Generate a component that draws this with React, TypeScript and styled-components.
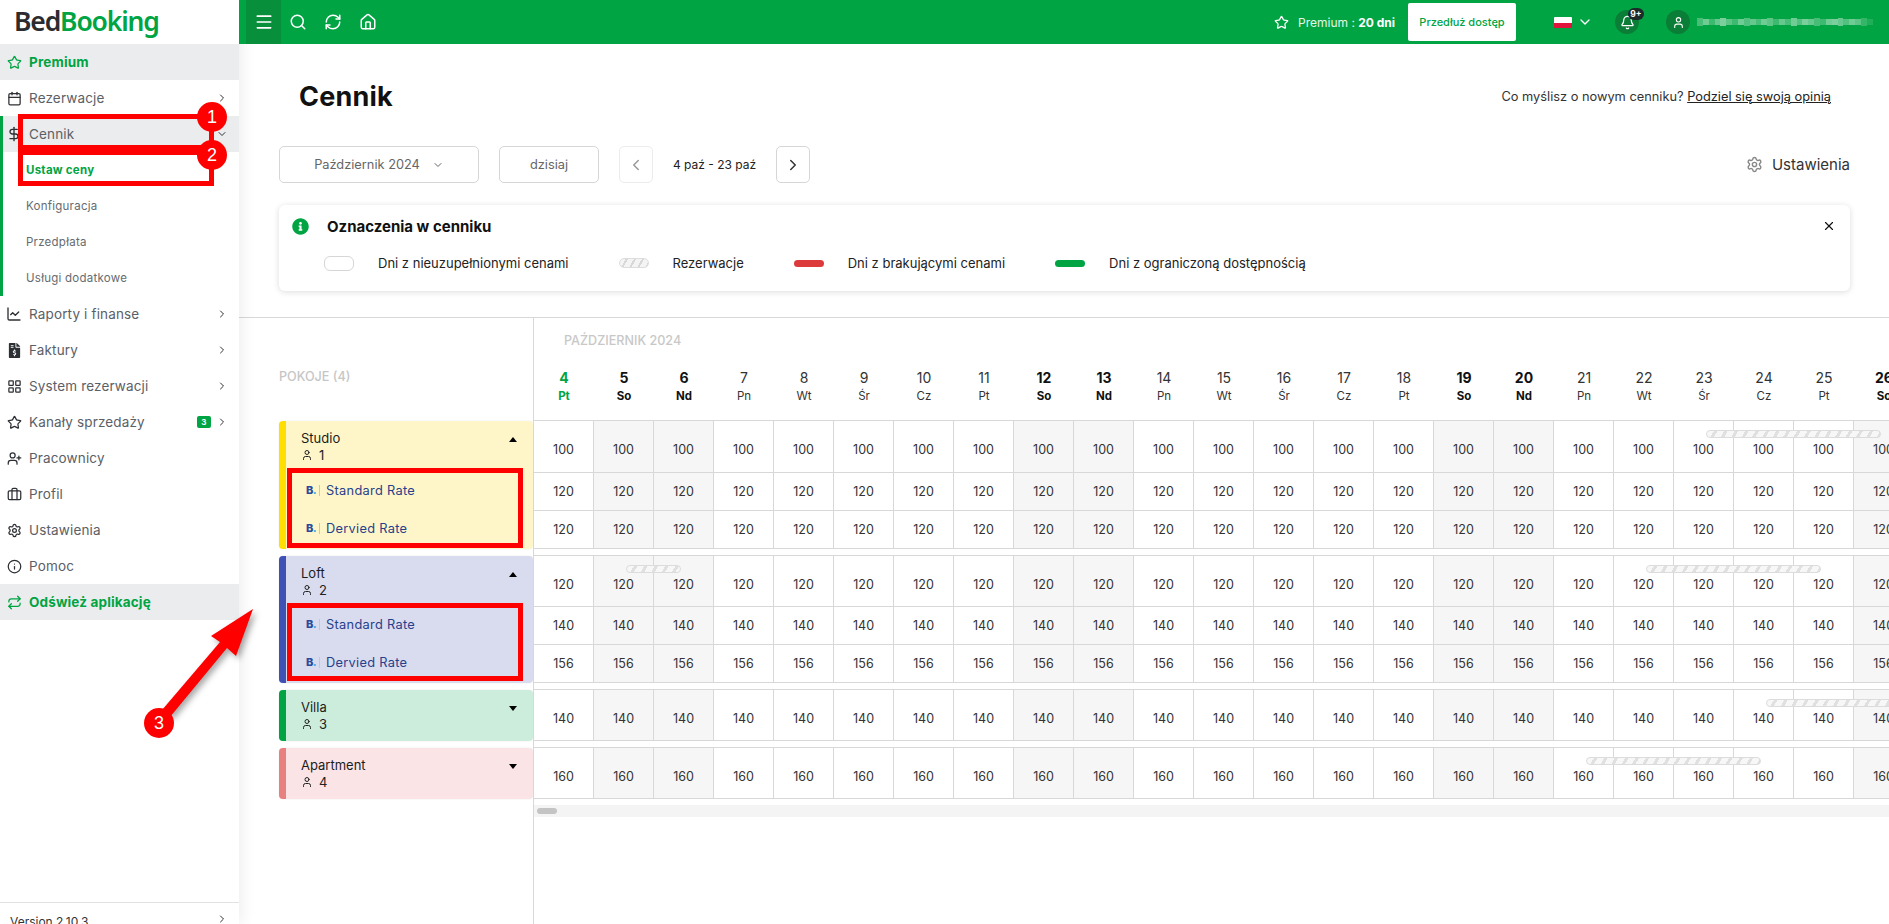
import React from 'react';
import styled, { createGlobalStyle } from 'styled-components';
import {
  Star, Calendar, DollarSign, ChartLine, LayoutGrid, UserPlus, Briefcase, Settings, Info, Repeat,
  ChevronRight, ChevronDown, ChevronLeft, Menu, Search, RefreshCw, House, Bell, User, X,
} from 'lucide-react';
import { FaFileInvoiceDollar, FaInfoCircle } from 'react-icons/fa';

const GREEN = '#00a443';
const GRID = '#d8d8d8';
const FONT = 'Inter, "Open Sans", sans-serif';

const GlobalStyle = createGlobalStyle`
  html, body { margin: 0; padding: 0; background: #fff; }
  body { font-family: ${FONT}; color: #222; overflow: hidden; }
  * { box-sizing: border-box; }
`;

const Page = styled.div`
  position: relative;
  display: flex;
  width: 1889px;
  height: 924px;
  overflow: hidden;
`;

/* sidebar */
const Sidebar = styled.aside`
  position: relative;
  z-index: 1;
  display: flex;
  flex-direction: column;
  flex: 0 0 239px;
  height: 924px;
  overflow: hidden;
  background: #fff;
`;

const SidebarShadow = styled.div`
  flex: 0 0 239px;
  height: 924px;
  box-shadow: 3px 0 14px rgba(0, 0, 0, 0.07);
  position: relative;
`;

const Logo = styled.div`
  height: 44px;
  padding-left: 14px;
  font-family: "Noto Sans", sans-serif;
  font-size: 26.5px;
  line-height: 42px;
  font-weight: 600;
  letter-spacing: -1.15px;
  color: #2b2b30;
  span { color: ${GREEN}; }
`;

const NavRow = styled.div<{ $active?: boolean; $strong?: boolean; $nested?: boolean }>`
  display: flex;
  align-items: center;
  height: 36px;
  padding-left: ${p => (p.$nested ? 3 : 6)}px;
  padding-right: 11px;
  font-size: 13.5px;
  letter-spacing: 0.15px;
  color: ${p => (p.$strong ? GREEN : '#5b6066')};
  font-weight: ${p => (p.$strong ? 700 : 400)};
  background: ${p => (p.$active ? '#ebecee' : 'transparent')};
`;

const NavIcon = styled.span<{ $green?: boolean }>`
  display: flex;
  align-items: center;
  justify-content: center;
  flex: 0 0 16px;
  margin-right: 7px;
  color: ${p => (p.$green ? GREEN : '#2c2f33')};
`;

const NavLabel = styled.span`
  flex: 1;
  white-space: nowrap;
`;

const NavGroup = styled.div`
  border-left: 3px solid ${GREEN};
`;

const SubItem = styled.div<{ $current?: boolean }>`
  display: flex;
  align-items: center;
  height: 36px;
  padding-left: 23px;
  font-size: 11.5px;
  letter-spacing: 0.25px;
  color: ${p => (p.$current ? GREEN : '#666b70')};
  font-weight: ${p => (p.$current ? 700 : 400)};
`;

const CountBadge = styled.span`
  margin-right: 5px;
  width: 14px;
  height: 12px;
  border-radius: 2px;
  background: ${GREEN};
  color: #fff;
  font-size: 8px;
  font-weight: 700;
  line-height: 12px;
  text-align: center;
`;

const VersionRow = styled.div`
  display: flex;
  justify-content: space-between;
  margin-top: auto;
  height: 22px;
  padding: 10px 11px 0 10px;
  border-top: 1px solid #e2e2e2;
  font-size: 12px;
  line-height: 17px;
  color: #333;
  white-space: nowrap;
`;

/* top bar */
const Main = styled.main`
  flex: 1;
  min-width: 0;
  display: flex;
  flex-direction: column;
`;

const TopBar = styled.header`
  position: relative;
  z-index: 2;
  display: flex;
  align-items: center;
  flex: 0 0 44px;
  padding: 0 16px 0 7px;
  background: ${GREEN};
  color: #fff;
`;

const MenuButton = styled.div`
  display: flex;
  align-items: center;
  justify-content: center;
  width: 35px;
  height: 44px;
  margin-right: -1px;
  background: #088f3c;
`;

const TopIcon = styled.div`
  display: flex;
  justify-content: center;
  width: 35px;
`;

const TopRight = styled.div`
  display: flex;
  align-items: center;
  margin-left: auto;
`;

const PremiumText = styled.span`
  margin: 0 13px 0 9px;
  font-size: 12px;
  color: #e4f6ea;
  white-space: nowrap;
  b { color: #fff; font-weight: 700; }
`;

const ExtendButton = styled.div`
  width: 108px;
  height: 38px;
  margin-right: 38px;
  border-radius: 2px;
  background: #fff;
  color: ${GREEN};
  font-size: 11px;
  font-weight: 500;
  line-height: 38px;
  text-align: center;
  white-space: nowrap;
`;

const Flag = styled.div`
  width: 18px;
  height: 11px;
  margin-right: 5px;
  border-radius: 1px;
  background: linear-gradient(#fff 0 55%, #e0143c 55% 100%);
`;

const RoundIcon = styled.div`
  position: relative;
  display: flex;
  align-items: center;
  justify-content: center;
  width: 24px;
  height: 24px;
  border-radius: 50%;
  background: #0a7d36;
`;

const BellWrap = styled(RoundIcon)`
  margin: 0 27px 0 22px;
`;

const NotifyBadge = styled.span`
  position: absolute;
  top: -2px;
  right: -5px;
  width: 16px;
  height: 12px;
  border-radius: 6px;
  background: #1c2b2a;
  font-size: 8.5px;
  font-weight: 700;
  line-height: 12px;
  text-align: center;
`;

const BlurredName = styled.div`
  display: flex;
  align-items: center;
  width: 176px;
  height: 12px;
  margin-left: 7px;
`;

const BlurCell = styled.span<{ $o: number; $h: number }>`
  flex: 1;
  height: ${p => p.$h}px;
  background: #fff;
  opacity: ${p => p.$o * 0.8};
`;

/* page head */
const TitleRow = styled.div`
  display: flex;
  align-items: center;
  justify-content: space-between;
  height: 40px;
  margin-top: 32px;
  padding: 0 58px 0 60px;
`;

const Title = styled.h1`
  margin: 0;
  font-size: 27px;
  font-weight: 700;
  letter-spacing: 0.2px;
  color: #111;
`;

const Feedback = styled.div`
  font-size: 12.8px;
  color: #333;
  a { color: #222; text-decoration: underline; }
`;

const Controls = styled.div`
  display: flex;
  align-items: center;
  height: 37px;
  margin-top: 30px;
  padding: 0 39px 0 40px;
`;

const ControlButton = styled.div<{ $w: number; $faded?: boolean; $mr?: number }>`
  display: flex;
  align-items: center;
  justify-content: center;
  gap: 12px;
  flex: 0 0 ${p => p.$w}px;
  height: 37px;
  margin-right: ${p => p.$mr ?? 0}px;
  border: 1px solid ${p => (p.$faded ? '#ececec' : '#d6d6d6')};
  border-radius: 5px;
  font-size: 12.8px;
  color: #666;
`;

const DateRange = styled.div`
  flex: 0 0 123px;
  font-size: 12px;
  color: #222;
  text-align: center;
  white-space: nowrap;
`;

const SettingsLink = styled.div`
  display: flex;
  align-items: center;
  gap: 9px;
  margin-left: auto;
  font-size: 15px;
  color: #333;
  svg { color: #888; }
`;

const LegendCard = styled.section`
  height: 86px;
  margin: 22px 39px 26px 40px;
  padding: 12px 14px 0 13px;
  border-radius: 6px;
  background: #fff;
  box-shadow: 0 1px 6px rgba(0, 0, 0, 0.14);
`;

const LegendHead = styled.div`
  display: flex;
  align-items: center;
  height: 18px;
  color: ${GREEN};
`;

const LegendTitle = styled.h2`
  margin: 0 auto 0 18px;
  font-size: 15px;
  font-weight: 700;
  color: #111;
`;

const LegendItems = styled.div`
  display: flex;
  align-items: center;
  margin-top: 20px;
  padding-left: 32px;
`;

const LegendLabel = styled.span`
  margin: 0 50px 0 24px;
  font-size: 13px;
  color: #222;
  white-space: nowrap;
`;

const EmptySwatch = styled.span`
  width: 30px;
  height: 15px;
  border: 1px solid #d6d6d6;
  border-radius: 6px;
`;

const HatchSwatch = styled.span`
  width: 30px;
  height: 10px;
  border: 1px solid #ddd;
  border-radius: 5px;
  background: repeating-linear-gradient(120deg, #f4f4f4 0 5px, #d8d8d8 5px 7px);
`;

const BarSwatch = styled.span<{ $color: string }>`
  width: 30px;
  height: 7px;
  border-radius: 4px;
  background: ${p => p.$color};
`;

/* pricing table */
const Pricing = styled.section`
  flex: 1;
  display: flex;
  min-height: 0;
  border-top: 1px solid ${GRID};
`;

const RoomsColumn = styled.div`
  flex: 0 0 294px;
  padding-left: 40px;
`;

const RoomsHeader = styled.div`
  height: 103px;
  padding-top: 52px;
  font-size: 12.6px;
  font-weight: 500;
  line-height: 14px;
  color: #c6c6c6;
`;

const RoomCard = styled.div<{ $bg: string; $stripe: string }>`
  display: flex;
  margin-top: 7px;
  border-radius: 4px;
  overflow: hidden;
  background: ${p => p.$bg};
  box-shadow: 0 0 0 1px rgba(0, 0, 0, 0.025);
  ${RoomsHeader} + & { margin-top: 0; }
  &::before {
    content: '';
    flex: 0 0 7px;
    background: ${p => p.$stripe};
  }
`;

const RoomBody = styled.div`
  flex: 1;
  min-width: 0;
`;

const RoomHead = styled.div<{ $h: number }>`
  height: ${p => p.$h}px;
  padding: 9px 16px 0 15px;
`;

const RoomName = styled.div`
  display: flex;
  align-items: center;
  justify-content: space-between;
  height: 16px;
  font-size: 13px;
  color: #1c1c1c;
`;

const Caret = styled.span<{ $open?: boolean }>`
  width: 0;
  height: 0;
  margin-top: 2px;
  border-left: 4px solid transparent;
  border-right: 4px solid transparent;
  ${p => (p.$open ? 'border-bottom: 5px solid #000;' : 'border-top: 5px solid #000;')}
`;

const RoomCount = styled.div`
  display: flex;
  align-items: center;
  gap: 6px;
  height: 16px;
  margin-top: 1px;
  font-size: 13px;
  color: #222;
`;

const RateRow = styled.div`
  display: flex;
  align-items: center;
  height: 38px;
  padding: 0 0 4px 20px;
  font-size: 12.8px;
  letter-spacing: 0.3px;
  color: #27408b;
`;

const BookingMark = styled.span`
  width: 14px;
  margin-right: 6px;
  border-right: 1px solid #c7c7d0;
  font-size: 11px;
  font-weight: 800;
  line-height: 11px;
  color: #2a4b9b;
  letter-spacing: -0.5px;
  i { color: #3ba8e6; font-style: normal; }
`;

const CalendarPane = styled.div`
  flex: 1;
  min-width: 0;
  overflow: hidden;
  border-left: 1px solid ${GRID};
`;

const CalendarHead = styled.div`
  height: 102px;
  padding-top: 16px;
`;

const MonthLabel = styled.div`
  margin-left: 30px;
  font-size: 12.6px;
  font-weight: 500;
  line-height: 14px;
  color: #c8c8c8;
`;

const DaysRow = styled.div`
  display: flex;
  margin-top: 21px;
`;

const DayCol = styled.div<{ $tone: 'today' | 'weekend' | 'plain' }>`
  flex: 0 0 60px;
  text-align: center;
  color: ${p => (p.$tone === 'today' ? GREEN : p.$tone === 'weekend' ? '#111' : '#333')};
  font-weight: ${p => (p.$tone === 'plain' ? 400 : 700)};
`;

const DayNumber = styled.div`
  font-size: 14px;
  line-height: 18px;
`;

const DayName = styled.div`
  margin-top: 2px;
  font-size: 11.5px;
  line-height: 14px;
`;

const RateGroup = styled.div`
  position: relative;
  margin-top: 6px;
  border-top: 1px solid ${GRID};
  ${CalendarHead} + & { margin-top: 0; }
`;

const CellRow = styled.div<{ $h: number; $pad: number }>`
  display: flex;
  height: ${p => p.$h}px;
  & > div { padding-top: ${p => p.$pad}px; }
`;

const PriceCell = styled.div<{ $weekend: boolean }>`
  display: flex;
  align-items: center;
  justify-content: center;
  flex: 0 0 60px;
  border-right: 1px solid ${GRID};
  border-bottom: 1px solid ${GRID};
  background: ${p => (p.$weekend ? '#f6f6f6' : '#fff')};
  font-size: 12.5px;
  color: #333;
`;

const ReservationBar = styled.span<{ $day: number; $span: number }>`
  position: absolute;
  top: 9px;
  left: ${p => 32 + p.$day * 60}px;
  width: ${p => p.$span * 60 - 5}px;
  height: 8px;
  border: 1px solid #dcdcdc;
  border-radius: 4px;
  background: repeating-linear-gradient(120deg, #f7f7f7 0 6px, #e0e0e0 6px 9px);
`;

const ScrollTrack = styled.div`
  height: 12px;
  margin-top: 6px;
  padding: 3px;
  background: #f4f4f4;
`;

const ScrollThumb = styled.div`
  width: 20px;
  height: 6px;
  border-radius: 3px;
  background: #c4c4c4;
`;

/* red annotations drawn over the screenshot */
const MarkBox = styled.div<{ $x: number; $y: number; $w: number; $h: number }>`
  position: absolute;
  z-index: 5;
  left: ${p => p.$x}px;
  top: ${p => p.$y}px;
  width: ${p => p.$w}px;
  height: ${p => p.$h}px;
  border: 5px solid #ff0000;
`;

const MarkDot = styled.div<{ $x: number; $y: number }>`
  position: absolute;
  z-index: 6;
  left: ${p => p.$x - 15}px;
  top: ${p => p.$y - 15}px;
  width: 30px;
  height: 30px;
  border-radius: 50%;
  background: #ff0000;
  color: #fff;
  font-family: "Liberation Sans", sans-serif;
  font-size: 18px;
  line-height: 30px;
  text-align: center;
`;

const MarkArrow = styled.svg`
  position: absolute;
  z-index: 5;
  left: 0;
  top: 0;
  pointer-events: none;
  filter: drop-shadow(3px 3px 3px rgba(0, 0, 0, 0.35));
`;

const navTop = [
  { icon: <Calendar size={15} />, label: 'Rezerwacje', more: true },
];

const subItems = ['Konfiguracja', 'Przedpłata', 'Usługi dodatkowe'];

const navBottom = [
  { icon: <ChartLine size={16} />, label: 'Raporty i finanse', more: true },
  { icon: <FaFileInvoiceDollar size={15} />, label: 'Faktury', more: true },
  { icon: <LayoutGrid size={15} />, label: 'System rezerwacji', more: true },
  { icon: <Star size={15} />, label: 'Kanały sprzedaży', more: true, badge: 3 },
  { icon: <UserPlus size={15} />, label: 'Pracownicy' },
  { icon: <Briefcase size={15} />, label: 'Profil' },
  { icon: <Settings size={15} />, label: 'Ustawienia' },
  { icon: <Info size={15} />, label: 'Pomoc' },
];

const dayNames = ['Pt', 'So', 'Nd', 'Pn', 'Wt', 'Śr', 'Cz'];
const days = Array.from({ length: 23 }, (_, i) => ({
  num: i + 4,
  name: dayNames[i % 7],
  weekend: i % 7 === 1 || i % 7 === 2,
}));

const rooms = [
  {
    name: 'Studio', guests: 1, bg: '#fef6c9', stripe: '#ffdf00', head: 52, open: true,
    prices: [100, 120, 120], rates: ['Standard Rate', 'Dervied Rate'],
    bars: [{ day: 19, span: 3 }],
  },
  {
    name: 'Loft', guests: 2, bg: '#d9dbef', stripe: '#3f51b5', head: 51, open: true,
    prices: [120, 140, 156], rates: ['Standard Rate', 'Dervied Rate'],
    bars: [{ day: 1, span: 1 }, { day: 18, span: 3 }],
  },
  {
    name: 'Villa', guests: 3, bg: '#cceddb', stripe: GREEN, head: 51, open: false,
    prices: [140], rates: [], bars: [{ day: 20, span: 3 }],
  },
  {
    name: 'Apartment', guests: 4, bg: '#fae4e6', stripe: '#e88080', head: 51, open: false,
    prices: [160], rates: [], bars: [{ day: 17, span: 3 }],
  },
];

const blur = [
  .35, .55, .3, .5, .6, .45, .3, .55, .4, .5, .35, .55, .45, .3, .5, .35, .55, .4, .6, .5,
  .35, .3, .55, .6, .5, .4, .55, .45, .25, .15,
];

export default function App() {
  return (
    <Page>
      <GlobalStyle />
      <SidebarShadow>
        <Sidebar>
          <Logo>Bed<span>Booking</span></Logo>
          <NavRow $active $strong>
            <NavIcon $green><Star size={15} /></NavIcon>
            <NavLabel>Premium</NavLabel>
          </NavRow>
          {navTop.map(item => (
            <NavRow key={item.label}>
              <NavIcon>{item.icon}</NavIcon>
              <NavLabel>{item.label}</NavLabel>
              <ChevronRight size={12} color="#333" />
            </NavRow>
          ))}
          <NavGroup>
            <NavRow $active $nested>
              <NavIcon><DollarSign size={16} /></NavIcon>
              <NavLabel>Cennik</NavLabel>
              <ChevronDown size={12} color="#333" />
            </NavRow>
            <SubItem $current>Ustaw ceny</SubItem>
            {subItems.map(label => <SubItem key={label}>{label}</SubItem>)}
          </NavGroup>
          {navBottom.map(item => (
            <NavRow key={item.label}>
              <NavIcon>{item.icon}</NavIcon>
              <NavLabel>{item.label}</NavLabel>
              {item.badge && <CountBadge>{item.badge}</CountBadge>}
              {item.more && <ChevronRight size={12} color="#333" />}
            </NavRow>
          ))}
          <NavRow $active $strong>
            <NavIcon $green><Repeat size={15} /></NavIcon>
            <NavLabel>Odśwież aplikację</NavLabel>
          </NavRow>
          <VersionRow>
            Version 2.10.3
            <ChevronRight size={12} color="#333" />
          </VersionRow>
        </Sidebar>
      </SidebarShadow>

      <Main>
        <TopBar>
          <MenuButton><Menu size={20} /></MenuButton>
          <TopIcon><Search size={18} /></TopIcon>
          <TopIcon><RefreshCw size={18} /></TopIcon>
          <TopIcon><House size={18} /></TopIcon>
          <TopRight>
            <Star size={15} />
            <PremiumText>Premium : <b>20 dni</b></PremiumText>
            <ExtendButton>Przedłuż dostęp</ExtendButton>
            <Flag />
            <ChevronDown size={16} />
            <BellWrap>
              <Bell size={15} />
              <NotifyBadge>9+</NotifyBadge>
            </BellWrap>
            <RoundIcon><User size={13} /></RoundIcon>
            <BlurredName>
              {blur.map((o, i) => <BlurCell key={i} $o={o} $h={i % 4 === 0 ? 8 : 6} />)}
            </BlurredName>
          </TopRight>
        </TopBar>

        <TitleRow>
          <Title>Cennik</Title>
          <Feedback>Co myślisz o nowym cenniku? <a>Podziel się swoją opinią</a></Feedback>
        </TitleRow>

        <Controls>
          <ControlButton $w={200} $mr={20}>Październik 2024 <ChevronDown size={12} /></ControlButton>
          <ControlButton $w={100} $mr={20}>dzisiaj</ControlButton>
          <ControlButton $w={34} $faded><ChevronLeft size={18} color="#999" /></ControlButton>
          <DateRange>4 paź - 23 paź</DateRange>
          <ControlButton $w={34}><ChevronRight size={18} color="#333" /></ControlButton>
          <SettingsLink><Settings size={17} />Ustawienia</SettingsLink>
        </Controls>

        <LegendCard>
          <LegendHead>
            <FaInfoCircle size={17} />
            <LegendTitle>Oznaczenia w cenniku</LegendTitle>
            <X size={14} color="#111" />
          </LegendHead>
          <LegendItems>
            <EmptySwatch />
            <LegendLabel>Dni z nieuzupełnionymi cenami</LegendLabel>
            <HatchSwatch />
            <LegendLabel>Rezerwacje</LegendLabel>
            <BarSwatch $color="#dd3b3b" />
            <LegendLabel>Dni z brakującymi cenami</LegendLabel>
            <BarSwatch $color={GREEN} />
            <LegendLabel>Dni z ograniczoną dostępnością</LegendLabel>
          </LegendItems>
        </LegendCard>

        <Pricing>
          <RoomsColumn>
            <RoomsHeader>POKOJE (4)</RoomsHeader>
            {rooms.map(room => (
              <RoomCard key={room.name} $bg={room.bg} $stripe={room.stripe}>
                <RoomBody>
                  <RoomHead $h={room.head}>
                    <RoomName>{room.name}<Caret $open={room.open} /></RoomName>
                    <RoomCount><User size={12} />{room.guests}</RoomCount>
                  </RoomHead>
                  {room.rates.map(rate => (
                    <RateRow key={rate}>
                      <BookingMark>B<i>.</i></BookingMark>
                      {rate}
                    </RateRow>
                  ))}
                </RoomBody>
              </RoomCard>
            ))}
          </RoomsColumn>

          <CalendarPane>
            <CalendarHead>
              <MonthLabel>PAŹDZIERNIK 2024</MonthLabel>
              <DaysRow>
                {days.map(d => (
                  <DayCol key={d.num} $tone={d.num === 4 ? 'today' : d.weekend ? 'weekend' : 'plain'}>
                    <DayNumber>{d.num}</DayNumber>
                    <DayName>{d.name}</DayName>
                  </DayCol>
                ))}
              </DaysRow>
            </CalendarHead>
            {rooms.map(room => (
              <RateGroup key={room.name}>
                {room.prices.map((price, r) => (
                  <CellRow key={r} $h={r === 0 ? room.head : 38} $pad={r === 0 ? 6 : 0}>
                    {days.map(d => <PriceCell key={d.num} $weekend={d.weekend}>{price}</PriceCell>)}
                  </CellRow>
                ))}
                {room.bars.map(bar => <ReservationBar key={bar.day} $day={bar.day} $span={bar.span} />)}
              </RateGroup>
            ))}
            <ScrollTrack><ScrollThumb /></ScrollTrack>
          </CalendarPane>
        </Pricing>
      </Main>

      <MarkBox $x={18} $y={114} $w={196} $h={36} />
      <MarkBox $x={18} $y={150} $w={196} $h={36} />
      <MarkBox $x={287} $y={468} $w={236} $h={80} />
      <MarkBox $x={287} $y={603} $w={236} $h={78} />
      <MarkArrow width="1889" height="924" viewBox="0 0 1889 924">
        <polygon fill="#ff0000" points="253,609 236,656 227,648 170,717 162,710 220,642 211,636" />
      </MarkArrow>
      <MarkDot $x={212} $y={117}>1</MarkDot>
      <MarkDot $x={212} $y={155}>2</MarkDot>
      <MarkDot $x={159} $y={723}>3</MarkDot>
    </Page>
  );
}
